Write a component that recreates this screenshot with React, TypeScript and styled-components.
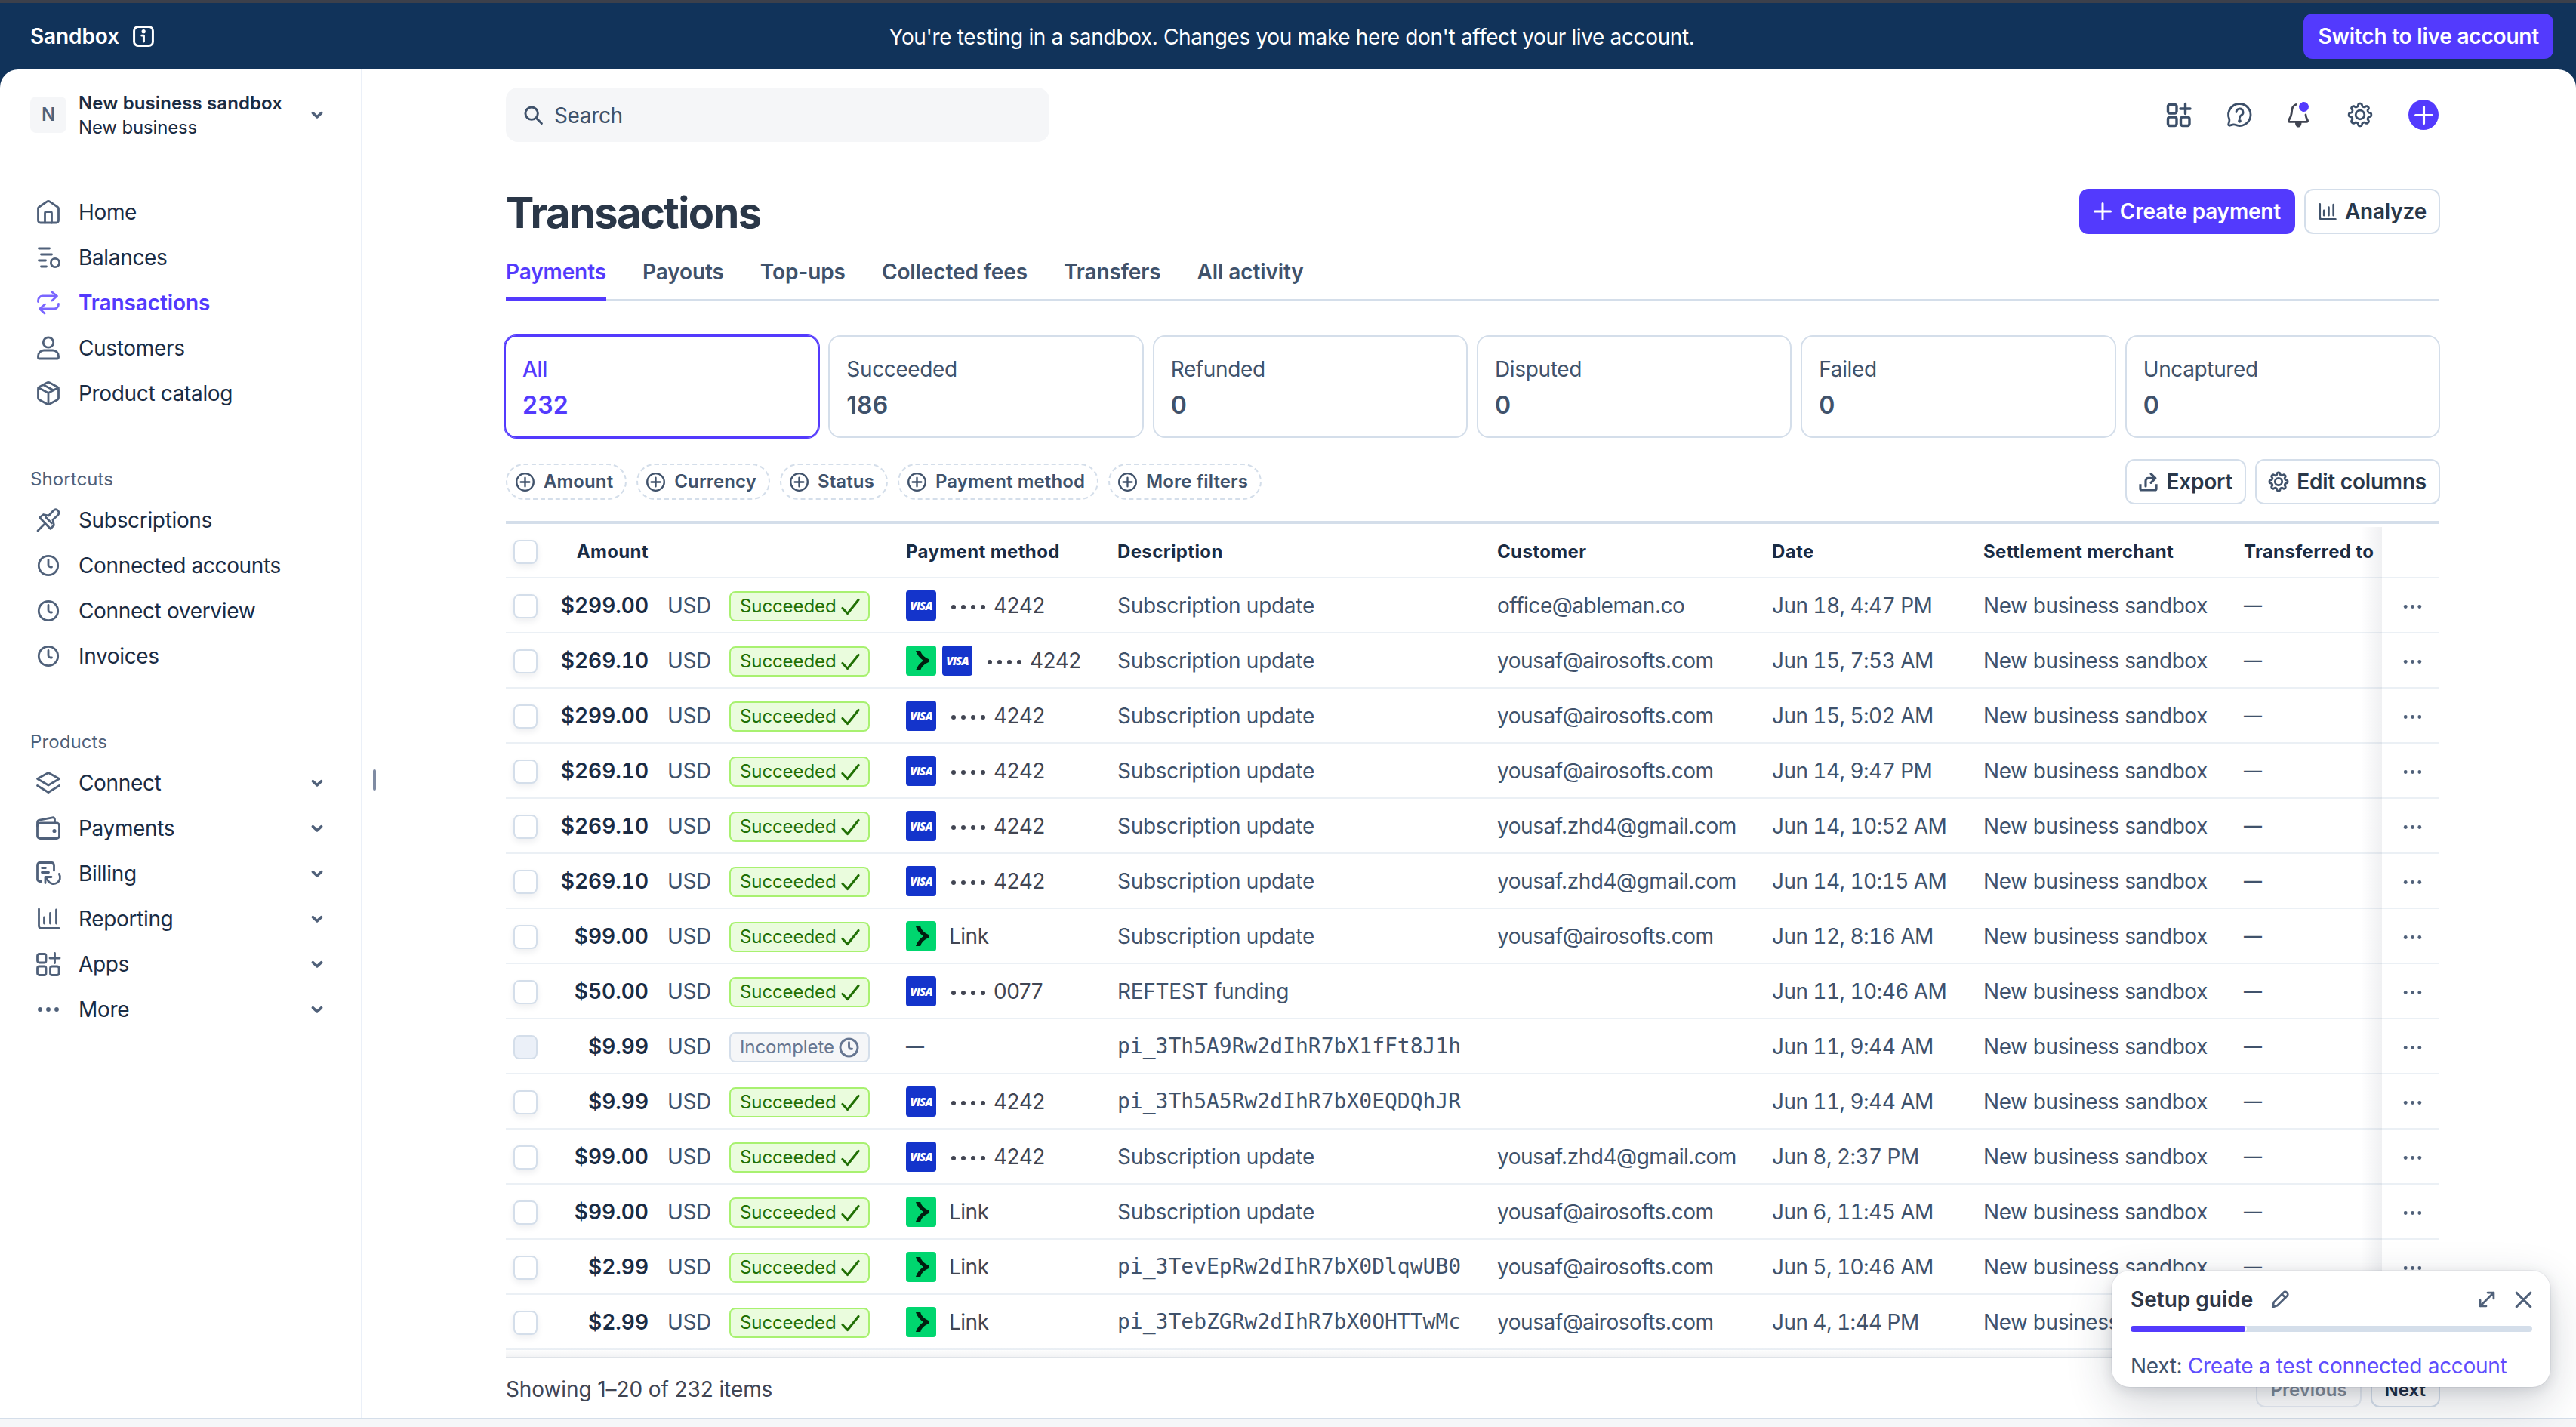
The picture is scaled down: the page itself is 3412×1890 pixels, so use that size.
import * as React from 'react';
import styled, { createGlobalStyle, css } from 'styled-components';

type IconName =
  | 'home'
  | 'balances'
  | 'transfer'
  | 'person'
  | 'box'
  | 'pin'
  | 'clock'
  | 'layers'
  | 'wallet'
  | 'invoice'
  | 'chart'
  | 'apps'
  | 'more'
  | 'search'
  | 'help'
  | 'bell'
  | 'gear'
  | 'plus'
  | 'plusCircle'
  | 'export'
  | 'pencil'
  | 'expand'
  | 'close'
  | 'check'
  | 'chevron'
  | 'info';

type NavEntry = { icon: IconName; label: string; active?: boolean; expandable?: boolean };

type Method = { brands: ('visa' | 'link')[]; last4?: string; label?: string };

type Payment = {
  amount: string;
  incomplete?: boolean;
  method?: Method;
  description: string;
  customer: string;
  date: string;
};

function buildGearPath(teeth: number, outer: number, inner: number): string {
  const steps = 160;
  const mid = (outer + inner) / 2;
  const amp = (outer - inner) / 2;
  let d = '';
  for (let i = 0; i < steps; i++) {
    const angle = (i / steps) * Math.PI * 2;
    const wave = Math.tanh(Math.cos(angle * teeth) * 2.2) / Math.tanh(2.2);
    const r = mid + amp * wave;
    d += `${i ? 'L' : 'M'}${(16 + r * Math.cos(angle)).toFixed(2)} ${(16 + r * Math.sin(angle)).toFixed(2)}`;
  }
  return `${d}Z`;
}

const GEAR_PATH = buildGearPath(8, 14.8, 11.3);

// All icons are drawn on a 32x32 grid.
const ICONS: Record<IconName, React.ReactNode> = {
  home: (
    <>
      <path d="M2.5 11.6c0-1 .5-2 1.4-2.6L14 2.2c1.2-.8 2.8-.8 4 0L28.1 9c.9.6 1.4 1.6 1.4 2.6V27a3 3 0 0 1-3 3h-21a3 3 0 0 1-3-3z" />
      <path d="M11.5 30V17.5a2 2 0 0 1 2-2h5a2 2 0 0 1 2 2V30" />
    </>
  ),
  balances: (
    <>
      <path d="M3.5 4h14M6.5 12h14M3.5 20h9M6.5 28h7" />
      <circle cx="25" cy="23" r="5.6" />
    </>
  ),
  transfer: (
    <>
      <path d="M2.5 14.5V13a6 6 0 0 1 6-6H27M20.5 1.5 27.5 7l-6.5 6" />
      <path d="M29.5 17.5V18a6 6 0 0 1-6 6H5M11.5 18 4.5 24l6.5 6" />
    </>
  ),
  person: (
    <>
      <circle cx="16" cy="8.5" r="6.7" />
      <path d="M2.5 28.5v-2A7.5 7.5 0 0 1 10 19h12a7.5 7.5 0 0 1 7.5 7.5v2A1.5 1.5 0 0 1 28 30H4a1.5 1.5 0 0 1-1.5-1.5z" />
    </>
  ),
  box: (
    <>
      <path d="M14.5 1.8a3 3 0 0 1 3 0L28 7.5a3 3 0 0 1 1.5 2.6v11.8a3 3 0 0 1-1.5 2.6l-10.5 5.7a3 3 0 0 1-3 0L4 24.5a3 3 0 0 1-1.5-2.6V10.1A3 3 0 0 1 4 7.5z" />
      <path d="M3 8.5 16 15.5l13-7M16 15.5V30M9.5 4.8l13 7" />
    </>
  ),
  pin: (
    <>
      <path d="M2 30 10.5 21.5" />
      <path d="M4.5 12.5 9.5 8.5l7 1.5 6-6.5c2-2 4.5-2 6.2-.3s1.7 4.5-.3 6.3l-6.5 6 1.5 7-4.5 5z" />
      <path d="m12.5 12 8 8" />
    </>
  ),
  clock: (
    <>
      <circle cx="16" cy="16" r="12.7" />
      <path d="M16 8.5V15a3 3 0 0 0 3 3h1.5" />
    </>
  ),
  layers: (
    <>
      <path d="M16 2.5 30.5 10.5 16 19 1.5 10.5z" />
      <path d="M1.5 19.5 16 28.5l14.5-9" />
    </>
  ),
  wallet: (
    <>
      <rect x="1.5" y="9" width="29" height="20.5" rx="3.5" />
      <path d="M1.5 13V8.5a3.5 3.5 0 0 1 2.8-3.4L21.5 1.8a2.5 2.5 0 0 1 3 2.5V9" />
      <circle cx="24" cy="19.5" r="1.2" fill="currentColor" />
    </>
  ),
  invoice: (
    <>
      <path d="M6.5 26.5H4.5a3 3 0 0 1-3-3V4.5a3 3 0 0 1 3-3h16a3 3 0 0 1 3 3V12M7.5 8.5h5M7.5 14.5h9" />
      <path d="M20 20.5h-8v8M12.5 20.5l3 5a8.5 8.5 0 0 0 14.8-9" />
    </>
  ),
  chart: <path d="M3.5 3v22.5a3 3 0 0 0 3 3H30M10.5 14v8M18.5 8.5V22M26.5 4v18" />,
  apps: (
    <>
      <rect x="1.5" y="2.5" width="11.5" height="11.5" rx="2.5" />
      <rect x="1.5" y="19" width="11.5" height="11.5" rx="2.5" />
      <rect x="18.5" y="19" width="11.5" height="11.5" rx="2.5" />
      <path d="M24.5 1.5v13M18 8h13" />
    </>
  ),
  more: (
    <g fill="currentColor" stroke="none">
      <circle cx="5" cy="16" r="2.9" />
      <circle cx="16" cy="16" r="2.9" />
      <circle cx="27" cy="16" r="2.9" />
    </g>
  ),
  search: (
    <>
      <circle cx="13" cy="13" r="10.5" />
      <path d="m21 21 9 9" />
    </>
  ),
  help: (
    <>
      <path d="M16.5 1.5a14.5 14.5 0 1 1-5.8 27.8c-1.3-.6-2.4-.5-3.7-.1l-3.6 1c-1.1.3-2-.6-1.7-1.7l1-3.6c.4-1.3.3-2.3-.1-3.6A14.5 14.5 0 0 1 16.5 1.5z" />
      <path d="M12 12.5a4.5 4.5 0 1 1 6.6 4c-1.5.8-2.1 1.7-2.1 3.5" />
      <circle cx="16.5" cy="24.3" r="1" fill="currentColor" />
    </>
  ),
  bell: (
    <>
      <path d="M11 2.5C7 4 5.8 7 5.6 11c-.2 4.5-1 7.5-3.8 11.8-.8 1.3-.2 2.5 1.2 2.5h22c1.4 0 2-1.2 1.2-2.5C24.8 20.5 24.2 18.5 24 16" />
      <path d="M10 26h8.5c0 4-1.5 6.5-4.2 6.5S10 30 10 26z" fill="currentColor" stroke="none" />
    </>
  ),
  gear: (
    <>
      <path d={GEAR_PATH} />
      <circle cx="16" cy="16" r="5.8" />
    </>
  ),
  plus: <path d="M16 2v28M2 16h28" />,
  plusCircle: (
    <>
      <circle cx="16" cy="16" r="14.5" />
      <path d="M16 8.5v15M8.5 16h15" />
    </>
  ),
  export: (
    <>
      <path d="M2.5 19.5v8a2 2 0 0 0 2 2h23a2 2 0 0 0 2-2v-8" strokeLinecap="butt" />
      <path d="M11.5 23V14A4.5 4.5 0 0 1 16 9.5h11M20.5 2 28 9.5 20.5 17" />
    </>
  ),
  pencil: (
    <>
      <path d="M3 29.5 5 21 22.5 3.5a3.5 3.5 0 0 1 5 0l1.2 1.2a3.5 3.5 0 0 1 0 5L11 27z" />
      <path d="m19.5 7 6 6" />
    </>
  ),
  expand: <path d="M3 29 29 3M17.5 3H29v11.5M3 17.5V29h11.5" />,
  close: <path d="M3 3l26 26M29 3 3 29" />,
  check: <path d="M2.5 18.5 11 27.5 29.5 4.5" />,
  chevron: <path d="m3 10.5 13 12 13-12" />,
  info: (
    <>
      <rect x="1.8" y="1.8" width="28.4" height="28.4" rx="6" />
      <path d="M13.5 15h3v9" />
      <circle cx="16.2" cy="8.8" r="1.3" fill="currentColor" />
    </>
  ),
};

const MAIN_NAV: NavEntry[] = [
  { icon: 'home', label: 'Home' },
  { icon: 'balances', label: 'Balances' },
  { icon: 'transfer', label: 'Transactions', active: true },
  { icon: 'person', label: 'Customers' },
  { icon: 'box', label: 'Product catalog' },
];

const SHORTCUTS: NavEntry[] = [
  { icon: 'pin', label: 'Subscriptions' },
  { icon: 'clock', label: 'Connected accounts' },
  { icon: 'clock', label: 'Connect overview' },
  { icon: 'clock', label: 'Invoices' },
];

const PRODUCTS: NavEntry[] = [
  { icon: 'layers', label: 'Connect', expandable: true },
  { icon: 'wallet', label: 'Payments', expandable: true },
  { icon: 'invoice', label: 'Billing', expandable: true },
  { icon: 'chart', label: 'Reporting', expandable: true },
  { icon: 'apps', label: 'Apps', expandable: true },
  { icon: 'more', label: 'More', expandable: true },
];

const TABS = ['Payments', 'Payouts', 'Top-ups', 'Collected fees', 'Transfers', 'All activity'];

const STATS = [
  { label: 'All', value: 232 },
  { label: 'Succeeded', value: 186 },
  { label: 'Refunded', value: 0 },
  { label: 'Disputed', value: 0 },
  { label: 'Failed', value: 0 },
  { label: 'Uncaptured', value: 0 },
];

const FILTERS = ['Amount', 'Currency', 'Status', 'Payment method', 'More filters'];

const VISA: Method = { brands: ['visa'], last4: '4242' };
const LINK: Method = { brands: ['link'], label: 'Link' };
const SUB = 'Subscription update';

const PAYMENTS: Payment[] = [
  { amount: '$299.00', method: VISA, description: SUB, customer: 'office@ableman.co', date: 'Jun 18, 4:47 PM' },
  {
    amount: '$269.10',
    method: { brands: ['link', 'visa'], last4: '4242' },
    description: SUB,
    customer: 'yousaf@airosofts.com',
    date: 'Jun 15, 7:53 AM',
  },
  { amount: '$299.00', method: VISA, description: SUB, customer: 'yousaf@airosofts.com', date: 'Jun 15, 5:02 AM' },
  { amount: '$269.10', method: VISA, description: SUB, customer: 'yousaf@airosofts.com', date: 'Jun 14, 9:47 PM' },
  { amount: '$269.10', method: VISA, description: SUB, customer: 'yousaf.zhd4@gmail.com', date: 'Jun 14, 10:52 AM' },
  { amount: '$269.10', method: VISA, description: SUB, customer: 'yousaf.zhd4@gmail.com', date: 'Jun 14, 10:15 AM' },
  { amount: '$99.00', method: LINK, description: SUB, customer: 'yousaf@airosofts.com', date: 'Jun 12, 8:16 AM' },
  {
    amount: '$50.00',
    method: { brands: ['visa'], last4: '0077' },
    description: 'REFTEST funding',
    customer: '',
    date: 'Jun 11, 10:46 AM',
  },
  {
    amount: '$9.99',
    incomplete: true,
    description: 'pi_3Th5A9Rw2dIhR7bX1fFt8J1h',
    customer: '',
    date: 'Jun 11, 9:44 AM',
  },
  { amount: '$9.99', method: VISA, description: 'pi_3Th5A5Rw2dIhR7bX0EQDQhJR', customer: '', date: 'Jun 11, 9:44 AM' },
  { amount: '$99.00', method: VISA, description: SUB, customer: 'yousaf.zhd4@gmail.com', date: 'Jun 8, 2:37 PM' },
  { amount: '$99.00', method: LINK, description: SUB, customer: 'yousaf@airosofts.com', date: 'Jun 6, 11:45 AM' },
  {
    amount: '$2.99',
    method: LINK,
    description: 'pi_3TevEpRw2dIhR7bX0DlqwUB0',
    customer: 'yousaf@airosofts.com',
    date: 'Jun 5, 10:46 AM',
  },
  {
    amount: '$2.99',
    method: LINK,
    description: 'pi_3TebZGRw2dIhR7bX0OHTTwMc',
    customer: 'yousaf@airosofts.com',
    date: 'Jun 4, 1:44 PM',
  },
];

function Icon({ name, size = 32, weight = 2.8 }: { name: IconName; size?: number; weight?: number }) {
  return (
    <IconSvg viewBox="0 0 32 32" width={size} height={size} strokeWidth={weight}>
      {ICONS[name]}
    </IconSvg>
  );
}

function NavList({ items }: { items: NavEntry[] }) {
  return (
    <nav>
      {items.map(({ icon, label, active, expandable }) => (
        <NavItem key={label} $active={active}>
          <Icon name={icon} />
          <NavLabel>{label}</NavLabel>
          {expandable && <Icon name="chevron" size={14} weight={8} />}
        </NavItem>
      ))}
    </nav>
  );
}

function Sidebar() {
  return (
    <SidebarWrapper>
      <AccountSwitcher>
        <Avatar>N</Avatar>
        <AccountNames>
          <strong>New business sandbox</strong>
          <span>New business</span>
        </AccountNames>
        <Icon name="chevron" size={14} weight={8} />
      </AccountSwitcher>
      <NavList items={MAIN_NAV} />
      <NavHeading>Shortcuts</NavHeading>
      <NavList items={SHORTCUTS} />
      <NavHeading>Products</NavHeading>
      <NavList items={PRODUCTS} />
    </SidebarWrapper>
  );
}

function TopBar() {
  return (
    <TopBarWrapper>
      <SearchBox>
        <Icon name="search" size={25} weight={3.8} />
        <span>Search</span>
      </SearchBox>
      <TopActions>
        <Icon name="apps" weight={3.4} />
        <Icon name="help" weight={2.8} />
        <BellWrapper>
          <Icon name="bell" weight={2.8} />
          <BellDot />
        </BellWrapper>
        <Icon name="gear" weight={2.8} />
        <AddCircle>
          <Icon name="plus" size={25} weight={4} />
        </AddCircle>
      </TopActions>
    </TopBarWrapper>
  );
}

function PaymentMethod({ method }: { method?: Method }) {
  if (!method) {
    return <EmptyValue>—</EmptyValue>;
  }
  return (
    <MethodWrapper>
      {method.brands.map((brand) =>
        brand === 'visa' ? (
          <VisaLogo key={brand}>VISA</VisaLogo>
        ) : (
          <LinkLogo key={brand} viewBox="0 0 40 40">
            <path d="M13 7h6.2c1.2 4.8 5.3 8.8 10.8 11v4c-5.5 2.2-9.600 6.2-10.8 11H13c1.6-5.2 5.3-9.700 10-13-4.7-3.3-8.4-7.8-10-13z" />
          </LinkLogo>
        ),
      )}
      {method.last4 && (
        <CardNumber>
          <DotGroup>
            <i />
            <i />
            <i />
            <i />
          </DotGroup>
          <MethodText>{method.last4}</MethodText>
        </CardNumber>
      )}
      {method.label && <MethodLabel>{method.label}</MethodLabel>}
    </MethodWrapper>
  );
}

function PaymentRow({ payment }: { payment: Payment }) {
  const { amount, incomplete, method, description, customer, date } = payment;
  return (
    <Row>
      <CheckCell>
        <Checkbox $disabled={incomplete} />
      </CheckCell>
      <AmountCell>{amount}</AmountCell>
      <CurrencyCell>USD</CurrencyCell>
      <StatusBadge $muted={incomplete}>
        {incomplete ? 'Incomplete' : 'Succeeded'}
        <Icon name={incomplete ? 'clock' : 'check'} size={incomplete ? 29 : 25} weight={incomplete ? 3.2 : 4} />
      </StatusBadge>
      <PaymentMethod method={method} />
      {description.startsWith('pi_') ? (
        <MonoCell>{description}</MonoCell>
      ) : (
        <DescriptionCell>{description}</DescriptionCell>
      )}
      <Cell>{customer}</Cell>
      <DateCell>{date}</DateCell>
      <Cell>New business sandbox</Cell>
      <EmptyValue>—</EmptyValue>
      <ActionCell>
        <Icon name="more" size={27} />
      </ActionCell>
    </Row>
  );
}

function PaymentsTable() {
  return (
    <TableWrapper>
      <HeaderRow>
        <CheckCell>
          <Checkbox />
        </CheckCell>
        <HeaderAmount>Amount</HeaderAmount>
        <span />
        <span />
        <span>Payment method</span>
        <span>Description</span>
        <span>Customer</span>
        <span>Date</span>
        <span>Settlement merchant</span>
        <span>Transferred to</span>
        <span />
      </HeaderRow>
      {PAYMENTS.map((payment) => (
        <PaymentRow key={`${payment.date}${payment.description}`} payment={payment} />
      ))}
      <ColumnShade />
      <BottomShade />
    </TableWrapper>
  );
}

function SetupGuide() {
  return (
    <GuideCard>
      <GuideHeader>
        <GuideTitle>Setup guide</GuideTitle>
        <Icon name="pencil" size={24} weight={3.6} />
        <GuideControls>
          <Icon name="expand" size={22} weight={4} />
          <Icon name="close" size={23} weight={4.2} />
        </GuideControls>
      </GuideHeader>
      <ProgressTrack>
        <ProgressFill />
      </ProgressTrack>
      <GuideNext>
        Next: <a>Create a test connected account</a>
      </GuideNext>
    </GuideCard>
  );
}

export default function App() {
  return (
    <Page>
      <GlobalStyle />
      <Banner>
        <BannerLabel>
          Sandbox
          <Icon name="info" size={28} weight={3.4} />
        </BannerLabel>
        <BannerMessage>You're testing in a sandbox. Changes you make here don't affect your live account.</BannerMessage>
        <BannerAction>
          <PrimaryButton>Switch to live account</PrimaryButton>
        </BannerAction>
      </Banner>
      <Shell>
        <Sidebar />
        <ResizeHandle />
        <Main>
          <TopBar />
          <TitleRow>
            <Title>Transactions</Title>
            <ButtonGroup>
              <PrimaryButton>
                <Icon name="plus" size={24} weight={4} />
                Create payment
              </PrimaryButton>
              <SecondaryButton>
                <Icon name="chart" size={25} weight={3.4} />
                Analyze
              </SecondaryButton>
            </ButtonGroup>
          </TitleRow>
          <TabList>
            {TABS.map((tab, index) => (
              <Tab key={tab} $active={index === 0}>
                {tab}
              </Tab>
            ))}
          </TabList>
          <StatGrid>
            {STATS.map(({ label, value }, index) => (
              <StatCard key={label} $active={index === 0}>
                <span>{label}</span>
                <StatValue>{value}</StatValue>
              </StatCard>
            ))}
          </StatGrid>
          <FilterRow>
            {FILTERS.map((filter) => (
              <FilterChip key={filter}>
                <Icon name="plusCircle" size={25} weight={3} />
                {filter}
              </FilterChip>
            ))}
            <ButtonGroup>
              <SecondaryButton>
                <Icon name="export" size={25} weight={4} />
                Export
              </SecondaryButton>
              <SecondaryButton>
                <Icon name="gear" size={26} weight={3.4} />
                Edit columns
              </SecondaryButton>
            </ButtonGroup>
          </FilterRow>
          <PaymentsTable />
          <Footer>
            Showing 1–20 of 232 items
            <Pager>
              <PagerButton $disabled>Previous</PagerButton>
              <PagerButton>Next</PagerButton>
            </Pager>
          </Footer>
        </Main>
      </Shell>
      <BottomStrip />
      <SetupGuide />
    </Page>
  );
}

const GlobalStyle = createGlobalStyle`
  * {
    box-sizing: border-box;
  }

  body {
    margin: 0;
    background: #ffffff;
    font-family: Inter, 'Liberation Sans', sans-serif;
    font-size: 28px;
    line-height: 40px;
    letter-spacing: -0.36px;
    color: #40526b;
  }
`;

const IconSvg = styled.svg`
  flex: none;
  display: block;
  overflow: visible;
  fill: none;
  stroke: currentColor;
  stroke-linecap: round;
  stroke-linejoin: round;
`;

const Page = styled.div`
  position: relative;
  display: flex;
  flex-direction: column;
  width: 3412px;
  height: 1890px;
  overflow: hidden;
  background: #11335a;
`;

const Banner = styled.header`
  display: grid;
  grid-template-columns: 1fr auto 1fr;
  align-items: center;
  height: 92px;
  padding: 0 30px 0 40px;
  border-top: 4px solid #3c404b;
  color: #ffffff;
`;

const BannerLabel = styled.div`
  display: flex;
  align-items: center;
  gap: 18px;
  font-weight: 600;
  letter-spacing: -0.1px;
`;

const BannerMessage = styled.div`
  padding-top: 1px;
  white-space: nowrap;
`;

const BannerAction = styled.div`
  display: flex;
  justify-content: flex-end;
`;

const Shell = styled.div`
  flex: 1;
  display: flex;
  min-height: 0;
  border-radius: 24px 24px 0 0;
  background: #ffffff;
`;

const SidebarWrapper = styled.aside`
  width: 480px;
  flex: none;
  border-right: 2px solid #ebf0f8;
  color: #1a2c44;
`;

const AccountSwitcher = styled.div`
  display: flex;
  align-items: center;
  height: 64px;
  margin: 28px 51px 67px 40px;
  color: #50617a;
`;

const Avatar = styled.div`
  display: flex;
  align-items: center;
  justify-content: center;
  width: 48px;
  height: 48px;
  border-radius: 8px;
  background: #f5f6f8;
  font-size: 24px;
  font-weight: 600;
`;

const AccountNames = styled.div`
  flex: 1;
  display: flex;
  flex-direction: column;
  margin-left: 16px;
  padding-top: 2px;
  font-size: 24px;
  line-height: 32px;
  letter-spacing: -0.15px;
  color: #1a2c44;

  strong {
    font-weight: 600;
    letter-spacing: 0.1px;
  }
`;

const NavItem = styled.div<{ $active?: boolean }>`
  display: flex;
  align-items: center;
  height: 60px;
  padding: 0 51px 0 48px;
  color: ${({ $active }) => ($active ? '#533afd' : '#1a2c44')};
  font-weight: ${({ $active }) => ($active ? 600 : 400)};
  letter-spacing: ${({ $active }) => ($active ? '-0.1px' : '-0.34px')};

  ${IconSvg} {
    color: ${({ $active }) => ($active ? '#7a66ff' : '#50617a')};
  }
`;

const NavLabel = styled.span`
  flex: 1;
  margin-left: 24px;
`;

const NavHeading = styled.div`
  margin: 64px 0 4px 40px;
  font-size: 24px;
  letter-spacing: 0.1px;
  color: #50617a;
`;

const ResizeHandle = styled.div`
  flex: none;
  width: 4px;
  height: 28px;
  margin: 927px 0 0 14px;
  border-radius: 2px;
  background: #7f8ba3;
`;

const Main = styled.main`
  width: 2560px;
  margin-left: 172px;
`;

const TopBarWrapper = styled.div`
  display: flex;
  align-items: center;
  justify-content: space-between;
  height: 72px;
  margin-top: 24px;
`;

const SearchBox = styled.div`
  display: flex;
  align-items: center;
  gap: 15px;
  width: 720px;
  height: 72px;
  padding-left: 24px;
  border-radius: 16px;
  background: #f5f6f8;

  span {
    padding-top: 2px;
  }
`;

const TopActions = styled.div`
  display: flex;
  align-items: center;
  gap: 48px;
  color: #3c4f69;
`;

const BellWrapper = styled.div`
  position: relative;
  color: #414552;
`;

const BellDot = styled.div`
  position: absolute;
  top: -1px;
  right: 4px;
  width: 13px;
  height: 13px;
  border-radius: 50%;
  background: #533afd;
`;

const AddCircle = styled.div`
  display: flex;
  align-items: center;
  justify-content: center;
  width: 40px;
  height: 40px;
  border-radius: 50%;
  background: #533afd;
  color: #ffffff;
`;

const TitleRow = styled.div`
  display: flex;
  align-items: center;
  justify-content: space-between;
  height: 60px;
  margin: 62px -2px 0 0;
`;

const Title = styled.h1`
  margin: 0;
  padding-top: 3px;
  font-size: 56px;
  line-height: 60px;
  font-weight: 700;
  letter-spacing: -1.6px;
  color: #2a3748;
`;

const buttonBase = css`
  display: flex;
  align-items: center;
  height: 60px;
  border: 0;
  border-radius: 12px;
  font-family: inherit;
  font-size: 28px;
  font-weight: 600;
  letter-spacing: -0.2px;
  white-space: nowrap;
`;

const PrimaryButton = styled.button`
  ${buttonBase};
  gap: 11px;
  padding: 0 19px;
  background: #533afd;
  color: #ffffff;
`;

const SecondaryButton = styled.button`
  ${buttonBase};
  gap: 11px;
  padding: 0 16px;
  border: 2px solid #d4deea;
  background: #ffffff;
  color: #2a3748;

  ${IconSvg} {
    color: #40526b;
  }
`;

const ButtonGroup = styled.div`
  display: flex;
  gap: 12px;
  margin-left: auto;
`;

const TabList = styled.div`
  display: flex;
  gap: 48px;
  height: 88px;
  border-bottom: 2px solid #d4deea;
`;

const Tab = styled.div<{ $active: boolean }>`
  height: 88px;
  padding-top: 30px;
  font-weight: 600;
  letter-spacing: -0.11px;
  border-bottom: 4px solid ${({ $active }) => ($active ? '#533afd' : 'transparent')};
  color: ${({ $active }) => ($active ? '#533afd' : '#40526b')};
`;

const StatGrid = styled.div`
  display: grid;
  grid-template-columns: repeat(6, 1fr);
  gap: 12px;
  margin: 46px -2px 0;
`;

const StatCard = styled.div<{ $active: boolean }>`
  display: flex;
  flex-direction: column;
  gap: 8px;
  height: 136px;
  padding: 23px 22px 0;
  border: 2px solid ${({ $active }) => ($active ? '#533afd' : '#d4deea')};
  border-radius: 16px;
  box-shadow: ${({ $active }) => ($active ? '0 0 0 1px #533afd' : 'none')};
  color: ${({ $active }) => ($active ? '#533afd' : '#40526b')};

  span {
    font-weight: ${({ $active }) => ($active ? 500 : 400)};
  }
`;

const StatValue = styled.div`
  font-size: 32px;
  font-weight: 600;
  letter-spacing: 0.2px;
`;

const FilterRow = styled.div`
  display: flex;
  align-items: center;
  gap: 13px;
  margin: 28px -2px 22px 0;
`;

const FilterChip = styled.div`
  display: flex;
  align-items: center;
  gap: 12px;
  height: 48px;
  padding: 0 16px 0 11px;
  border: 2px dashed #d4deea;
  border-radius: 24px;
  font-size: 24px;
  font-weight: 600;
  letter-spacing: 0.12px;
  white-space: nowrap;
`;

const TableWrapper = styled.div`
  position: relative;
  height: 1108px;
  border-top: 4px solid #d4deea;
`;

const Row = styled.div`
  display: grid;
  grid-template-columns: 54px 135px 107px 234px 280px 503px 364px 280px 345px 183px 75px;
  align-items: center;
  height: 73px;
  padding-top: 1px;
  border-bottom: 2px solid #ebf0f5;
  white-space: nowrap;
`;

const HeaderRow = styled(Row)`
  height: 72px;
  padding-top: 3px;
  font-size: 24px;
  font-weight: 700;
  letter-spacing: 0.36px;
  color: #1a2c44;
`;

const Cell = styled.div`
  letter-spacing: -0.46px;
`;

const DescriptionCell = styled(Cell)`
  letter-spacing: -0.28px;
`;

const DateCell = styled(Cell)`
  font-variant-numeric: tabular-nums;
  letter-spacing: -0.56px;
`;

const CheckCell = styled.div`
  padding-left: 10px;
`;

const Checkbox = styled.div<{ $disabled?: boolean }>`
  width: 32px;
  height: 32px;
  margin-top: 1px;
  border: 2px solid #d4deea;
  border-radius: 8px;
  background: ${({ $disabled }) => ($disabled ? '#ebf0f8' : '#ffffff')};
  box-shadow: ${({ $disabled }) => ($disabled ? 'none' : '0 4px 8px rgba(30, 40, 70, 0.08)')};
`;

const AmountCell = styled.div`
  text-align: right;
  font-weight: 600;
  font-variant-numeric: tabular-nums;
  letter-spacing: 0;
  color: #1a2c44;
`;

const HeaderAmount = styled.div`
  text-align: right;
`;

const CurrencyCell = styled.div`
  padding-left: 25px;
`;

const StatusBadge = styled.div<{ $muted?: boolean }>`
  display: flex;
  align-items: center;
  justify-content: space-between;
  width: 186px;
  height: 40px;
  margin-top: 2px;
  padding: 0 11px 0 12px;
  border: 2px solid ${({ $muted }) => ($muted ? '#d4deea' : '#a8f170')};
  border-radius: 8px;
  background: ${({ $muted }) => ($muted ? '#f5f6f8' : '#eafcdd')};
  font-size: 24px;
  letter-spacing: -0.1px;
  color: ${({ $muted }) => ($muted ? '#667691' : '#217005')};
`;

const EmptyValue = styled.div`
  font-size: 24px;
  font-weight: 500;
`;

const MethodWrapper = styled.div`
  display: flex;
  align-items: center;
  gap: 8px;
`;

const VisaLogo = styled.div`
  display: flex;
  align-items: center;
  justify-content: center;
  width: 40px;
  height: 40px;
  border-radius: 4px;
  background: #1434cb;
  font-family: 'Open Sans', sans-serif;
  font-size: 15px;
  font-style: italic;
  font-weight: 800;
  letter-spacing: -0.9px;
  color: #ffffff;
`;

const LinkLogo = styled.svg`
  width: 40px;
  height: 40px;
  border-radius: 4px;
  background: #00d66f;
  fill: #011e0f;
`;

const CardNumber = styled.div`
  display: flex;
  align-items: center;
  gap: 11px;
  margin-left: 12px;
`;

const DotGroup = styled.div`
  display: flex;
  gap: 7px;
  padding-top: 3px;

  i {
    width: 6px;
    height: 6px;
    border-radius: 50%;
    background: #414552;
  }
`;

const MethodText = styled.span`
  letter-spacing: -0.5px;
  color: #414552;
`;

const MethodLabel = styled(MethodText)`
  margin-left: 9px;
`;

const MonoCell = styled.div`
  font-family: 'DejaVu Sans Mono', monospace;
  letter-spacing: 0;
`;

const ActionCell = styled.div`
  display: flex;
  justify-content: center;
  padding: 2px 0 0 5px;
  color: #50617a;
`;

const ColumnShade = styled.div`
  position: absolute;
  top: 4px;
  right: 75px;
  bottom: 0;
  width: 28px;
  background: linear-gradient(to left, rgba(40, 50, 80, 0.07), rgba(40, 50, 80, 0));
`;

const BottomShade = styled.div`
  position: absolute;
  left: 0;
  right: 0;
  bottom: 0;
  height: 12px;
  border-bottom: 1px solid #dfe3e8;
  background: linear-gradient(to top, rgba(40, 50, 80, 0.06), rgba(40, 50, 80, 0));
`;

const Footer = styled.div`
  display: flex;
  align-items: center;
  height: 84px;
  margin-right: -2px;
  letter-spacing: -0.1px;
  color: #414552;
`;

const Pager = styled.div`
  display: flex;
  gap: 12px;
  margin-left: auto;
`;

const PagerButton = styled.button<{ $disabled?: boolean }>`
  height: 48px;
  padding: 0 17px;
  border: 2px solid #d4deea;
  border-radius: 12px;
  background: #ffffff;
  font-family: inherit;
  font-size: 24px;
  font-weight: 600;
  letter-spacing: 0;
  color: #1a2c44;
  opacity: ${({ $disabled }) => ($disabled ? 0.55 : 1)};
`;

const BottomStrip = styled.div`
  flex: none;
  height: 12px;
  border-top: 2px solid #d4deea;
  background: #f5f6f8;
`;

const GuideCard = styled.section`
  position: absolute;
  right: 34px;
  bottom: 53px;
  width: 581px;
  height: 154px;
  padding: 18px 24px 0 25px;
  border-radius: 24px;
  background: #ffffff;
  box-shadow:
    0 0 0 1px rgba(30, 50, 90, 0.06),
    0 4px 16px rgba(30, 40, 60, 0.12),
    0 20px 60px rgba(30, 40, 60, 0.2);
`;

const GuideHeader = styled.div`
  display: flex;
  align-items: center;
  color: #50617a;
`;

const GuideTitle = styled.div`
  margin-right: 24px;
  font-weight: 600;
  letter-spacing: 0;
  color: #2f3747;
`;

const GuideControls = styled.div`
  display: flex;
  align-items: center;
  gap: 26px;
  margin-left: auto;
`;

const ProgressTrack = styled.div`
  height: 8px;
  margin-top: 15px;
  border-radius: 4px;
  background: #d4deea;
`;

const ProgressFill = styled.div`
  width: 154px;
  height: 8px;
  border-right: 2px solid #ffffff;
  border-radius: 4px;
  background: #533afd;
`;

const GuideNext = styled.div`
  margin-top: 25px;
  letter-spacing: -0.3px;
  white-space: nowrap;

  a {
    color: #5f4dfd;
  }
`;
